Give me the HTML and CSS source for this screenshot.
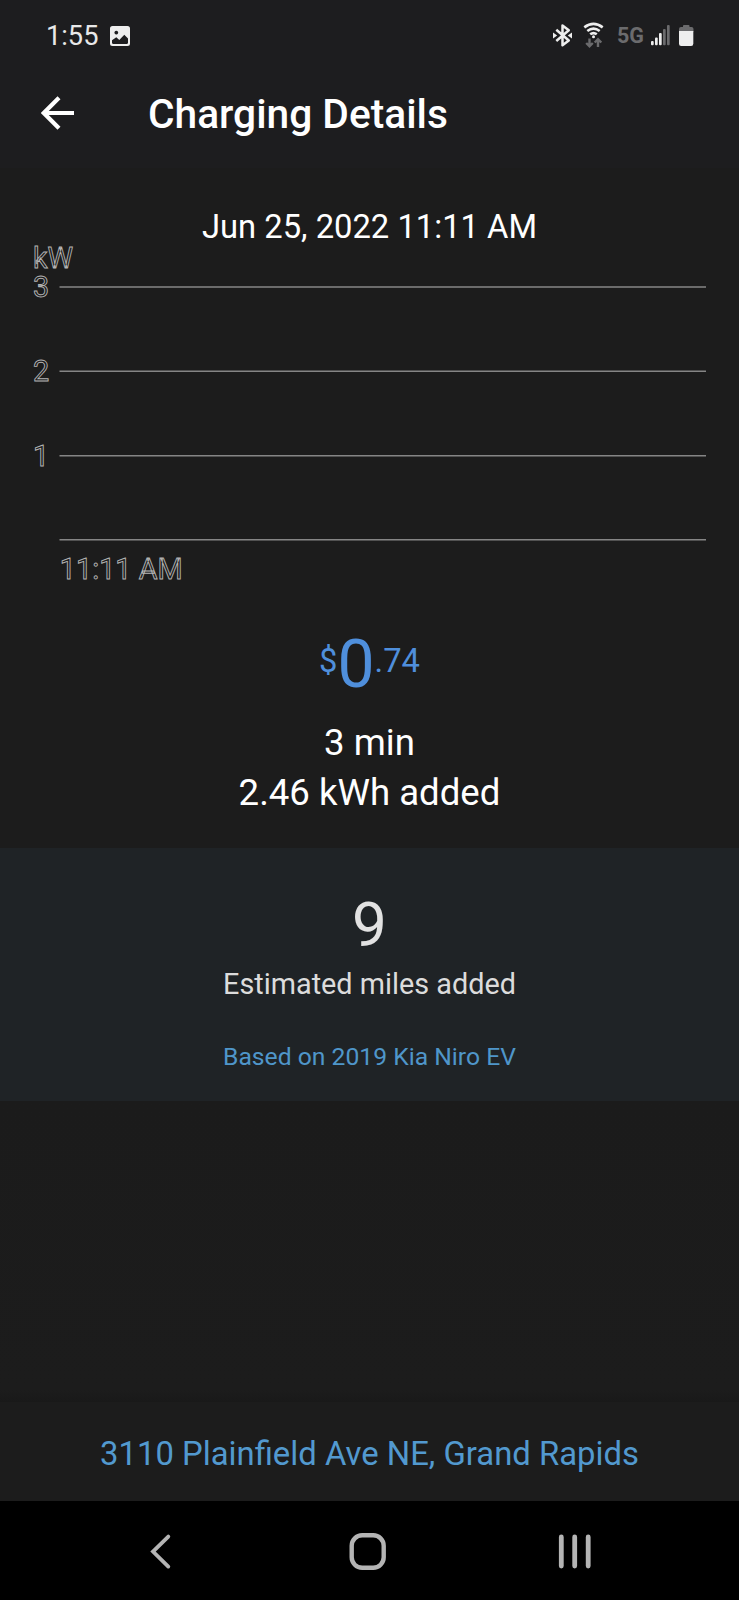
FILE: index.html
```html
<!DOCTYPE html>
<html lang="en">
<head>
<meta charset="utf-8">
<title>Charging Details</title>
<link rel="stylesheet" href="styles.css">
</head>
<body>
<div class="screen">
  <div class="status">
    <span class="clock">1:55</span>
    <svg class="photo" width="20" height="20" viewBox="0 0 20 20"><path fill="#eee" fill-rule="evenodd" d="M2.5 0h15A2.500 2.500 0 0 1 20 2.500v15a2.500 2.500 0 0 1-2.500 2.500h-15A2.500 2.500 0 0 1 0 17.500v-15A2.500 2.500 0 0 1 2.500 0ZM6.300 4.700a1.900 1.900 0 1 0 .01 0ZM2 14.200v2.600c0 .7.4 1.200 1.200 1.200h13.600c.8 0 1.200-.5 1.200-1.200v-4.300L14.300 8.700 9.300 14 6.300 11.300Z"/></svg>
    <svg class="indicators" width="146" height="30" viewBox="550 20 146 30">
      <g fill="none" stroke="#eee" stroke-width="2.500" stroke-linejoin="round">
        <path d="M556.300 29.800 568.800 40.500 562.500 45.200V25.600L568.800 30.300 556.300 41"/>
      </g>
      <path fill="#eee" d="M553 32.400l4.200 3-4.200 3ZM572 32.400l-4.200 3 4.200 3Z"/>
      <g fill="none" stroke="#eee" stroke-width="2.600">
        <path d="M584.300 27.400Q593.500 20.500 602.700 27.400M587.300 31Q593.500 26.400 599.700 31M590.200 34.300Q593.500 31.800 596.800 34.300"/>
      </g>
      <circle cx="593.500" cy="36.700" r="1.500" fill="#eee"/>
      <g fill="none" stroke="#6b6b6d" stroke-width="2.400">
        <path d="M589.500 38.500v7.500M586.200 43l3.300 3.300 3.300-3.300M598 47v-7.500M594.700 42.500l3.300-3.300 3.300 3.300"/>
      </g>
      <text x="617" y="42.700" class="network">5G</text>
      <g fill="#eee"><rect x="651" y="41" width="2.700" height="4.300" rx="1"/><rect x="655" y="37.500" width="2.700" height="7.800" rx="1"/><rect x="659" y="33" width="2.700" height="12.300" rx="1"/></g>
      <g fill="#6b6b6d"><rect x="663" y="29" width="2.700" height="16.300" rx="1"/><rect x="667" y="25" width="2.700" height="20.300" rx="1"/>
      <path d="M679 32v-3q0-2 2-2h2v-1q0-1 1-1h4.500q1 0 1 1v1h2q2 0 2 2v3Z"/></g>
      <path fill="#eee" d="M679 31h14.300v12.800q0 2.200-2.200 2.200h-9.900q-2.200 0-2.200-2.200Z"/>
    </svg>
  </div>
  <header class="header">
    <svg width="34" height="34" viewBox="0 0 34 34" fill="none" stroke="#fff" stroke-width="4.200"><path d="M33 17H3.500M18 1.800 2.800 17 18 32.200"/></svg>
    <h1 class="title">Charging Details</h1>
  </header>
  <main class="content">
    <p class="date">Jun 25, 2022 11:11 AM</p>
    <svg class="chart" width="739" height="360" viewBox="0 237 739 360">
      <g class="grid"><path d="M59.500 287H706M59.500 371.200H706M59.500 455.700H706M59.500 539.800H706"/></g>
      <g class="labels">
        <text x="33" y="267.700">kW</text>
        <text x="33" y="297">3</text>
        <text x="33" y="381.200">2</text>
        <text x="33" y="465.500">1</text>
        <text x="59.800" y="579.300">11:11 AM</text>
      </g>
    </svg>
    <div class="price"><span class="part">$</span><span class="whole">0</span><span class="part">.74</span></div>
    <p class="fact">3 min</p>
    <p class="fact">2.46 kWh added</p>
  </main>
  <section class="miles">
    <p class="count">9</p>
    <p class="caption">Estimated miles added</p>
    <p class="basis">Based on 2019 Kia Niro EV</p>
  </section>
  <div class="spacer"></div>
  <footer class="address">3110 Plainfield Ave NE, Grand Rapids</footer>
  <nav class="nav">
    <svg width="739" height="99" viewBox="0 1501 739 99" fill="none" stroke="#b4b4b4" stroke-linecap="round">
      <path stroke-width="3.800" d="M168.300 1536.600 153 1551.600l15.300 15"/>
      <rect x="351.700" y="1535.300" width="32" height="32.500" rx="10.500" stroke-width="4.400"/>
      <path stroke-width="4.800" d="M561.300 1537v29M574.700 1537v29M588.200 1537v29"/>
    </svg>
  </nav>
</div>
</body>
</html>
```
FILE: styles.css
```css
* { box-sizing: border-box; margin: 0; padding: 0; }
body { background: #1c1c1c; font-family: Roboto, sans-serif; color: #fff; }
svg { display: block; flex: none; }
.screen { width: 739px; height: 1600px; display: flex; flex-direction: column; overflow: hidden; }
.status { height: 62px; padding: 8px 43px 0 46px; display: flex; align-items: center; background: #1d1d1f; flex: none; }
.clock { width: 64px; padding-top: 2px; font-size: 27.200px; line-height: 54px; color: #e8e8e8; }
.photo { margin-top: 2px; }
.indicators { margin-left: auto; }
.network { font: 700 21.500px Roboto, sans-serif; fill: #6b6b6d; }
.header { height: 106px; padding: 0 0 4px 41px; display: flex; align-items: center; gap: 73px; background: #1d1d1f; flex: none; }
.title { padding-top: 1px; font-size: 40.700px; line-height: 48px; font-weight: 500; }
.content { height: 680px; padding-top: 39px; text-align: center; flex: none; }
.date { font-size: 32.750px; line-height: 40px; }
.chart { margin-top: -10px; }
.grid { fill: none; stroke: #858585; stroke-width: 1.500; }
.labels { font: 28.800px Roboto, sans-serif; fill: none; stroke: #b4b4b4; stroke-width: 0.900; }
.price { display: flex; justify-content: center; align-items: center; height: 66px; margin: 34.500px 0 20.500px; color: #4f8fdc; }
.whole { font-size: 66px; line-height: 66px; }
.part { font-size: 32.700px; line-height: 40px; padding-bottom: 8px; }
.fact { font-size: 36.600px; line-height: 50px; }
.miles { height: 253px; padding-top: 46px; background: #1f2326; text-align: center; flex: none; }
.count { font-size: 62px; line-height: 62px; color: #e2e2e2; }
.caption { margin-top: 10px; font-size: 28.800px; line-height: 36px; color: #dcdcdc; }
.basis { margin-top: 39.500px; font-size: 24.700px; line-height: 30px; color: #4f96ca; }
.spacer { flex: 1; background: linear-gradient(#1b1b1b, #1c1c1c 96%, #191919); }
.address { height: 99px; padding-top: 32px; font-size: 32.850px; line-height: 40px; text-align: center; color: #5299cf; background: #1c1c1c; flex: none; }
.nav { height: 99px; background: #000; flex: none; }
```
